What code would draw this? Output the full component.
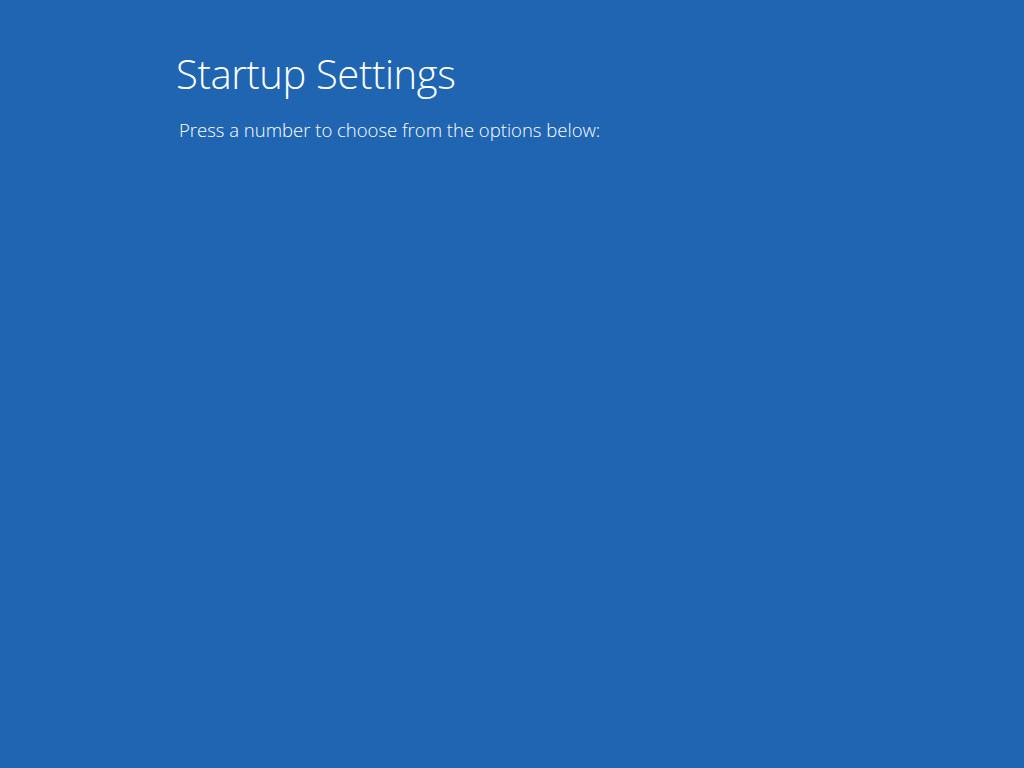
export default function App() {
  return (
    <div
      className="min-h-screen w-full bg-[#1f65b2] text-white"
      style={{ fontFamily: '"Open Sans", "Noto Sans", sans-serif' }}
    >
      <div className="pl-[176px] pt-[48px]">
        <h1 className="text-[40px] font-light leading-[52px] tracking-[-0.4px]">Startup Settings</h1>
        <p className="mt-[18px] pl-[3px] text-[18.5px] font-light leading-[24px]">
          Press a number to choose from the options below:
        </p>
      </div>
    </div>
  );
}
